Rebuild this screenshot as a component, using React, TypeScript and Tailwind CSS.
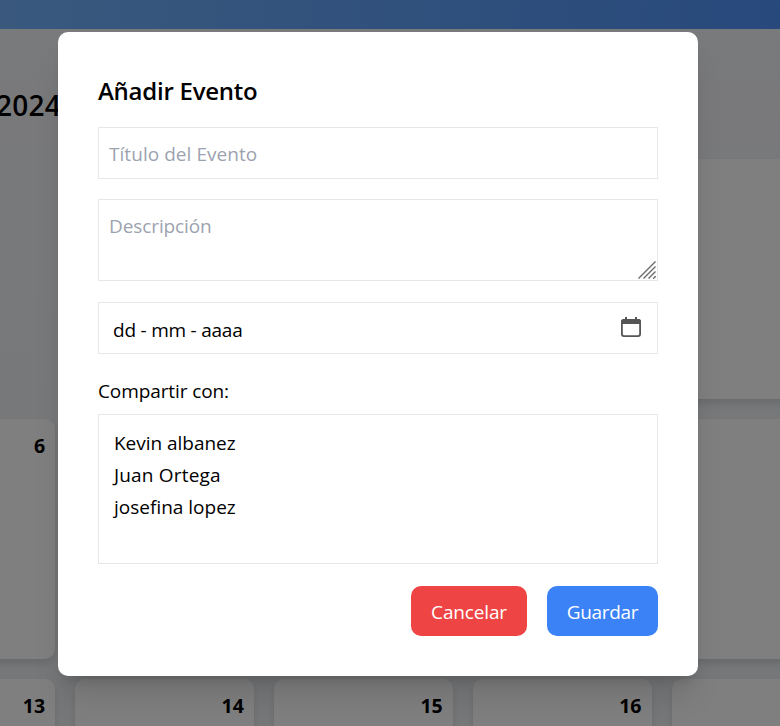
import React from 'react';

type Day = { key: string; label?: string; blank?: boolean };

const days: Day[] = [
  { key: 'a1', blank: true },
  { key: 'a2', blank: true },
  { key: 'a3', blank: true },
  { key: 'a4', blank: true },
  { key: 'a5' },
  { key: 'b1', label: '6' },
  { key: 'b2' },
  { key: 'b3' },
  { key: 'b4' },
  { key: 'b5' },
  { key: 'c1', label: '13' },
  { key: 'c2', label: '14' },
  { key: 'c3', label: '15' },
  { key: 'c4', label: '16' },
  { key: 'c5' },
];

const people = [
  { name: 'Kevin albanez', spacing: 'tracking-[-0.03px]' },
  { name: 'Juan Ortega', spacing: 'tracking-[0.18px]' },
  { name: 'josefina lopez', spacing: 'tracking-[0px]' },
];

function Calendar() {
  return (
    <div className="h-[726px] w-[780px] overflow-hidden bg-gradient-to-b from-[#f3f4f6] to-[#eceff3]">
      <header className="h-[29px] bg-[linear-gradient(97deg,#74b2fb,#4f93f8)]" />
      <div className="flex h-[130px] items-start pt-[56px]">
        <h1 className="-ml-1 text-[28px] leading-10 font-semibold tracking-[0.25px]">2024</h1>
      </div>
      <div className="-ml-[123.7px] grid w-[974px] grid-cols-5 gap-5">
        {days.map((d) =>
          d.blank ? (
            <div key={d.key} className="h-60" />
          ) : (
            <div
              key={d.key}
              className="h-60 rounded-[10px] bg-white px-[10px] pt-[12px] text-right text-[19.5px] leading-[30px] font-bold shadow-[0_5px_8px_-1px_rgba(0,0,0,0.13)]"
            >
              {d.label}
            </div>
          ),
        )}
      </div>
    </div>
  );
}

function CalendarIcon() {
  return (
    <svg className="-mt-[2px]" width="20" height="20" viewBox="0 0 20 20" fill="none">
      <rect x="0.9" y="3" width="18.2" height="16.1" rx="2" stroke="#555" strokeWidth="1.8" />
      <path d="M0 7V4.5Q0 2 2.5 2H4V0H6V2H14V0H16V2H17.5Q20 2 20 4.5V7Z" fill="#555" />
    </svg>
  );
}

function ResizeGrip() {
  return (
    <svg
      className="pointer-events-none absolute right-[2px] bottom-[2px]"
      width="18"
      height="18"
      viewBox="0 0 18 18"
      stroke="#6b6b6b"
      strokeWidth="1.4"
    >
      <path d="M0.5 17.5L17.5 0.5M5.5 17.5L17.5 5.5M10.5 17.5L17.5 10.5M15.2 17.7L17.7 15.2" />
    </svg>
  );
}

export default function App() {
  return (
    <div className="relative h-[726px] w-[780px] overflow-hidden font-['Segoe_UI','Open_Sans','Noto_Sans',sans-serif] text-black">
      <Calendar />
      <div className="absolute inset-0 bg-black/50 pt-8 pl-[58px]">
        <div className="flex h-[644px] w-[640px] flex-col rounded-[10px] bg-white px-10 pt-10 text-[19px] shadow-[0_25px_31px_-6px_rgba(0,0,0,0.12),0_10px_12px_-6px_rgba(0,0,0,0.12)]">
          <h2 className="h-[55px] text-[24px] leading-[38px] font-semibold tracking-[-0.25px]">Añadir Evento</h2>
          <input
            className="h-[52px] w-full border border-[#e5e7eb] px-[10px] pt-px tracking-[0.05px] outline-none placeholder:text-[#9ca3af]"
            placeholder="Título del Evento"
          />
          <div className="relative mt-5 h-[82px]">
            <textarea
              className="block h-[82px] w-full resize-none border border-[#e5e7eb] px-[10px] py-[11px] leading-[30px] tracking-[-0.1px] outline-none placeholder:text-[#9ca3af]"
              placeholder="Descripción"
            />
            <ResizeGrip />
          </div>
          <div className="mt-[21px] flex h-[52px] items-center justify-between border border-[#e5e7eb] pr-4 pl-[14px]">
            <span className="pt-[5px] tracking-[-0.22px]">dd - mm - aaaa</span>
            <CalendarIcon />
          </div>
          <label className="mt-[22px] h-[38px] leading-[30px] tracking-[-0.1px]">Compartir con:</label>
          <ul className="h-[150px] border border-[#e5e7eb] px-[15px] pt-3">
            {people.map((p) => (
              <li key={p.name} className={`h-8 leading-8 ${p.spacing}`}>
                {p.name}
              </li>
            ))}
          </ul>
          <div className="mt-[22px] flex justify-end gap-5 text-white">
            <button className="h-[50px] w-[116px] rounded-[10px] bg-[#ef4444] pt-[2px] tracking-[-0.15px]">Cancelar</button>
            <button className="h-[50px] w-[111px] rounded-[10px] bg-[#3b82f6] pt-[2px] tracking-[-0.3px]">Guardar</button>
          </div>
        </div>
      </div>
    </div>
  );
}
